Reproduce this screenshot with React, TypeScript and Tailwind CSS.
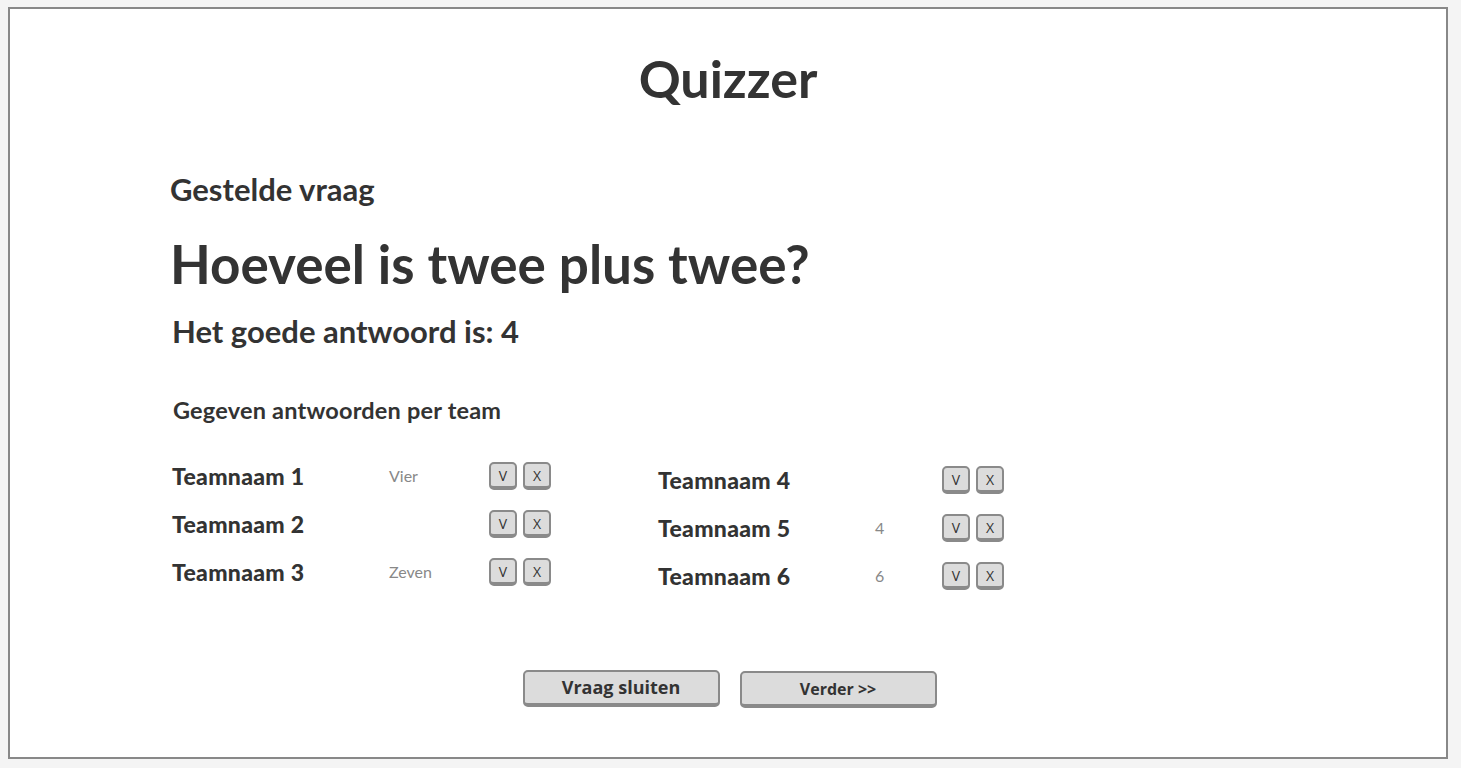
import React from "react";

function VX() {
  return (
    <div className="flex gap-[6px]">
      <div className="w-[28px] h-[28px] rounded-[5px] border-2 border-b-[4px] border-[#8a8a8a] bg-[#dcdcdc] flex items-center justify-center text-[14px] text-[#333] font-['Open_Sans',sans-serif]">
        V
      </div>
      <div className="w-[28px] h-[28px] rounded-[5px] border-2 border-b-[4px] border-[#8a8a8a] bg-[#dcdcdc] flex items-center justify-center text-[14px] text-[#333] font-['Open_Sans',sans-serif]">
        X
      </div>
    </div>
  );
}

function Row({ name, answer, ansW }: { name: string; answer: string; ansW: string }) {
  return (
    <div className="flex items-center h-[28px]">
      <div className="w-[217px] text-[23px] font-black text-[#333] tracking-[0.3px] font-['Lato',sans-serif]">{name}</div>
      <div className={`${ansW} text-[16px] text-[#888] font-['Lato',sans-serif]`}>{answer}</div>
      <VX />
    </div>
  );
}

export default function App() {
  return (
    <div className="w-[1461px] h-[768px] bg-[#f4f4f4] pt-[7px] pl-[8px] font-['Lato',sans-serif]">
      <div className="w-[1440px] h-[752px] bg-white border-2 border-[#888] flex flex-col text-[#333]">
        <h1 className="text-center text-[52px] font-bold leading-[60px] mt-[39px]">Quizzer</h1>
        <div className="pl-[160px]">
          <h2 className="text-[31px] font-bold leading-[36px] mt-[63px]">Gestelde vraag</h2>
          <h3 className="text-[53px] font-bold leading-[60px] mt-[27px]">Hoeveel is twee plus twee?</h3>
          <h4 className="text-[31px] font-bold leading-[36px] mt-[19px] pl-[2px]">Het goede antwoord is: 4</h4>
          <h5 className="text-[23.5px] font-bold leading-[28px] mt-[47px] pl-[3px] tracking-[0.2px]">Gegeven antwoorden per team</h5>
          <div className="flex mt-[38px] pl-[2px]">
            <div className="flex flex-col gap-[20px] w-[486px]">
              <Row name="Teamnaam 1" answer="Vier" ansW="w-[100px]" />
              <Row name="Teamnaam 2" answer="" ansW="w-[100px]" />
              <Row name="Teamnaam 3" answer="Zeven" ansW="w-[100px]" />
            </div>
            <div className="flex flex-col gap-[20px] mt-[4px]">
              <Row name="Teamnaam 4" answer="" ansW="w-[67px]" />
              <Row name="Teamnaam 5" answer="4" ansW="w-[67px]" />
              <Row name="Teamnaam 6" answer="6" ansW="w-[67px]" />
            </div>
          </div>
        </div>
        <div className="flex justify-center items-start gap-[20px] mt-[80px] pl-[3px] font-['Open_Sans',sans-serif]">
          <div className="w-[197px] h-[37px] rounded-[5px] border-2 border-b-[4px] border-[#8a8a8a] bg-[#dcdcdc] flex items-center justify-center text-[18px] font-bold">
            Vraag sluiten
          </div>
          <div className="w-[197px] h-[37px] mt-[1px] rounded-[5px] border-2 border-b-[4px] border-[#8a8a8a] bg-[#dcdcdc] flex items-center justify-center text-[16px] font-bold">
            Verder &gt;&gt;
          </div>
        </div>
      </div>
    </div>
  );
}
